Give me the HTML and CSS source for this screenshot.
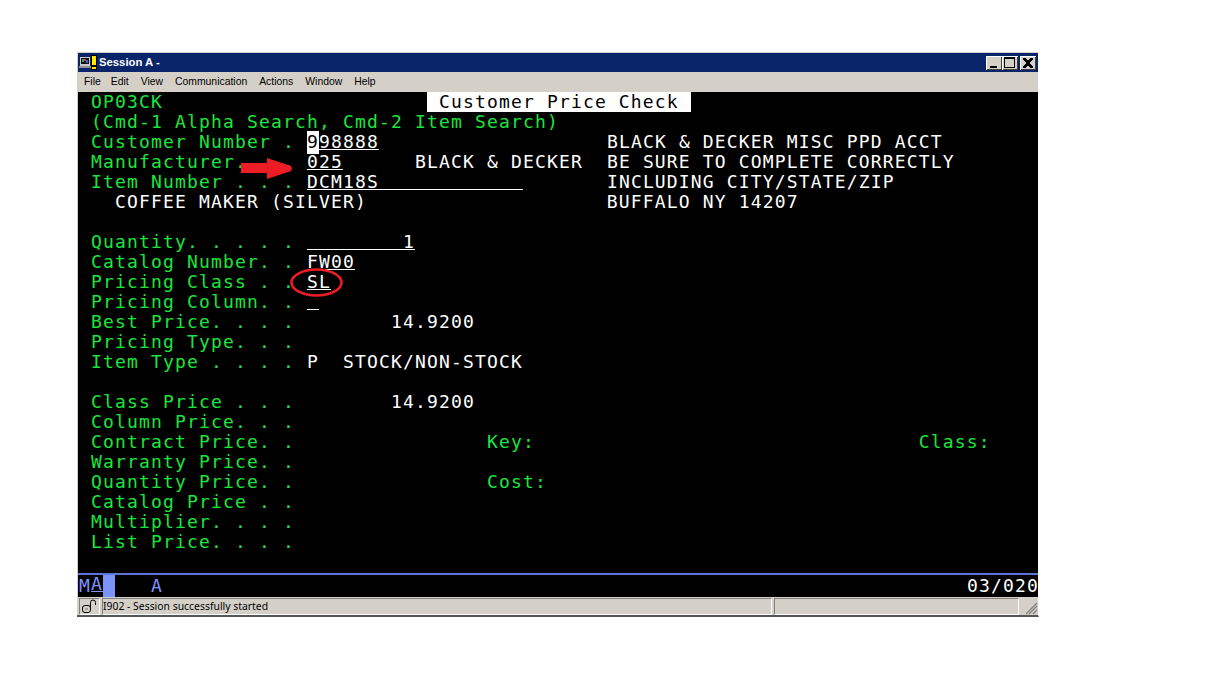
FILE: index.html
```html
<!DOCTYPE html>
<html lang="en">
<head>
<meta charset="utf-8">
<title>Session A</title>
<link rel="stylesheet" href="styles.css">
</head>
<body>
<div class="window">
  <div class="titlebar">
    <svg class="app-icon" width="19" height="16" viewBox="0 0 19 16" shape-rendering="crispEdges">
      <rect x="1" y="2" width="10" height="9" fill="#c8c8c8"/>
      <rect x="2" y="3" width="8" height="6" fill="#101010"/>
      <rect x="3" y="4" width="2" height="3" fill="#2fa05f"/>
      <rect x="5" y="4" width="2" height="2" fill="#e03030"/>
      <rect x="7" y="5" width="2" height="3" fill="#3060e0"/>
      <rect x="0" y="11" width="12" height="2" fill="#909090"/>
      <rect x="12" y="0" width="6" height="15" fill="#000"/>
      <rect x="13" y="1" width="4" height="9" fill="#ffe800"/>
      <rect x="13" y="12" width="4" height="2" fill="#ffe800"/>
    </svg>
    <span class="title-text">Session A -</span>
    <div class="win-buttons">
      <span class="win-btn"><svg width="16" height="14" viewBox="0 0 16 14" shape-rendering="crispEdges"><rect x="4" y="10" width="7" height="2" fill="#000"/></svg></span>
      <span class="win-btn"><svg width="16" height="14" viewBox="0 0 16 14" shape-rendering="crispEdges"><path d="M2 1h11v11H2z M3 3v8h9V3z" fill="#000" fill-rule="evenodd"/></svg></span>
      <span class="win-btn win-close"><svg width="16" height="14" viewBox="0 0 16 14" shape-rendering="crispEdges"><path d="M3 2h3v1h1v1h2V3h1V2h3v2h-1v1h-1v1h-1v2h1v1h1v1h1v2h-3v-1H9V10H7v1H6v1H3v-2h1V9h1V8h1V6H5V5H4V4H3z" fill="#000"/></svg></span>
    </div>
  </div>
  <div class="menubar">
    <span class="m-file">File</span><span>Edit</span><span>View</span><span>Communication</span><span>Actions</span><span>Window</span><span>Help</span>
  </div>
  <div class="terminal">
    <pre class="screen"><span class="g"> OP03CK                      </span><span class="rev"> Customer Price Check </span>
<span class="g"> (Cmd-1 Alpha Search, Cmd-2 Item Search)</span>
<span class="g"> Customer Number . </span><span class="w"><span class="cursor">9</span><u>98888</u>                   BLACK &amp; DECKER MISC PPD ACCT</span>
<span class="g"> Manufacturer. . . </span><span class="w"><u>025</u>      BLACK &amp; DECKER  BE SURE TO COMPLETE CORRECTLY</span>
<span class="g"> Item Number . . . </span><span class="w"><u>DCM18S            </u>       INCLUDING CITY/STATE/ZIP</span>
<span class="w">   COFFEE MAKER (SILVER)                    BUFFALO NY 14207</span>

<span class="g"> Quantity. . . . . </span><span class="w"><u>        1</u></span>
<span class="g"> Catalog Number. . </span><span class="w"><u>FW00</u></span>
<span class="g"> Pricing Class . . </span><span class="w"><u>SL</u></span>
<span class="g"> Pricing Column. . </span><span class="w"><u> </u></span>
<span class="g"> Best Price. . . . </span><span class="w">       14.9200</span>
<span class="g"> Pricing Type. . .</span>
<span class="g"> Item Type . . . . </span><span class="w">P  STOCK/NON-STOCK</span>

<span class="g"> Class Price . . .</span><span class="w">        14.9200</span>
<span class="g"> Column Price. . .</span>
<span class="g"> Contract Price. .                Key:                                Class:</span>
<span class="g"> Warranty Price. .</span>
<span class="g"> Quantity Price. .                Cost:</span>
<span class="g"> Catalog Price . .</span>
<span class="g"> Multiplier. . . .</span>
<span class="g"> List Price. . . .</span></pre>
    <svg class="arrow" width="52" height="21" viewBox="0 0 52 21">
      <path d="M0 5H26V0L50 8L51 10.5L50 13L26 21V15H0Z" fill="#ee1c25"/>
    </svg>
    <svg class="ring" width="54" height="30" viewBox="0 0 54 30">
      <ellipse cx="26.5" cy="14.5" rx="25" ry="13" fill="none" stroke="#ee1c25" stroke-width="2.6"/>
    </svg>
  </div>
  <div class="oia">
    <span class="oia-left"><span class="oia-m">M</span><span class="oia-a">A</span><span class="oia-block"></span></span>
    <span class="oia-mode">A</span>
    <span class="oia-pos">03/020</span>
  </div>
  <div class="statusbar">
    <span class="lock-cell">
      <svg width="17" height="15" viewBox="0 0 17 15" fill="none" stroke="#000"><rect x="1.5" y="6.5" width="8" height="7" rx="2.5"/><path d="M9.5 8.5V3.5a2 2 0 0 1 5 0V6"/><path d="M4 10h3" stroke="#777"/></svg>
    </span>
    <span class="message">I902 - Session successfully started</span>
    <span class="blank-cell"></span>
    <span class="grip"><svg width="14" height="14" viewBox="0 0 14 14"><path d="M13 2L2 13M13 5L5 13M13 9L9 13" stroke="#808080" stroke-width="1.2"/></svg></span>
  </div>
</div>
</body>
</html>
```

FILE: styles.css
```css
html, body { margin: 0; padding: 0; background: #fff; }
body { padding: 52px 0 0 77px; height: 640px; overflow: hidden; }
.window {
  width: 962px;
  height: 565px;
  box-sizing: border-box;
  background: #d4d0c8;
  display: flex;
  flex-direction: column;
  border-right: 1px solid #fff;
  border-bottom: 2px solid #555;
  border-top: 1px solid #d4d0c8;
  font-family: "Noto Sans", "Liberation Sans", sans-serif;
}
.titlebar {
  height: 19px;
  flex: none;
  background: #0a246a;
  margin-left: 1px;
  display: flex;
  align-items: center;
  color: #fff;
  font-family: "Liberation Sans", sans-serif;
  font-weight: bold;
  font-size: 11.3px;
}
.app-icon { margin: 0 1px 0 1px; flex: none; }
.title-text { flex: 1; margin-top: -2px; }
.win-buttons { display: flex; margin-right: 2px; }
.win-btn {
  width: 16px;
  height: 14px;
  background: #d4d0c8;
  box-shadow: inset 1px 1px 0 #fff, inset -1px -1px 0 #404040;
  display: block;
}
.win-btn svg { display: block; }
.win-close { margin-left: 2px; }
.menubar {
  height: 20px;
  flex: none;
  margin-left: 1px;
  box-sizing: border-box;
  padding: 0 0 2px 6px;
  display: flex;
  align-items: center;
  font-family: "Liberation Sans", sans-serif;
  font-size: 10.4px;
  color: #000;
  gap: 12px;
}
.m-file { margin-right: -2px; }
.terminal {
  position: relative;
  height: 481px;
  flex: none;
  background: #000;
  margin: 0 0 0 1px;
  overflow: hidden;
}
.screen {
  margin: 0;
  padding: 0 0 0 1px;
  font-family: "DejaVu Sans Mono", monospace;
  font-size: 18px;
  letter-spacing: 1.16px;
  line-height: 20px;
  color: #19e63c;
}
.g { color: #19e63c; }
.w { color: #fff; }
.w u { text-decoration-thickness: 1px; text-underline-offset: 1px; }
.rev { background: #fff; color: #000; }
.cursor { background: #fff; color: #000; box-shadow: 0 2px 0 #fff; }
.arrow { position: absolute; left: 163px; top: 66px; }
.ring { position: absolute; left: 212px; top: 176px; }
.oia {
  height: 24px;
  flex: none;
  margin-left: 1px;
  padding-left: 1px;
  box-sizing: border-box;
  background: #000;
  border-top: 2px solid #5f72d8;
  display: flex;
  align-items: stretch;
  font-family: "DejaVu Sans Mono", monospace;
  font-size: 18px;
  letter-spacing: 1.16px;
  line-height: 21px;
}
.oia-left { display: flex; width: 72px; color: #7b93ff; }
.oia-m { width: 12px; }
.oia-a { width: 12px; line-height: 18px; text-decoration: underline; text-decoration-thickness: 1px; }
.oia-block { width: 12px; background: #7b93ff; }
.oia-mode { color: #7b93ff; }
.oia-pos { color: #fff; margin-left: auto; margin-right: -1px; }
.statusbar {
  height: 18px;
  flex: none;
  margin-left: 1px;
  display: flex;
  align-items: stretch;
  font-size: 10.4px;
  color: #000;
  box-sizing: border-box;
  padding: 1px 0 0 1px;
}
.statusbar > span {
  box-sizing: border-box;
  border: 1px solid;
  border-color: #808080 #fff #fff #808080;
  display: flex;
  align-items: center;
}
.lock-cell { width: 21px; justify-content: center; margin-right: 2px; }
.message { width: 670px; padding-bottom: 2px; margin-right: 2px; }
.blank-cell { width: 245px; }
.statusbar > .grip { border: 0; flex: 1; align-items: flex-end; justify-content: flex-end; }
```
